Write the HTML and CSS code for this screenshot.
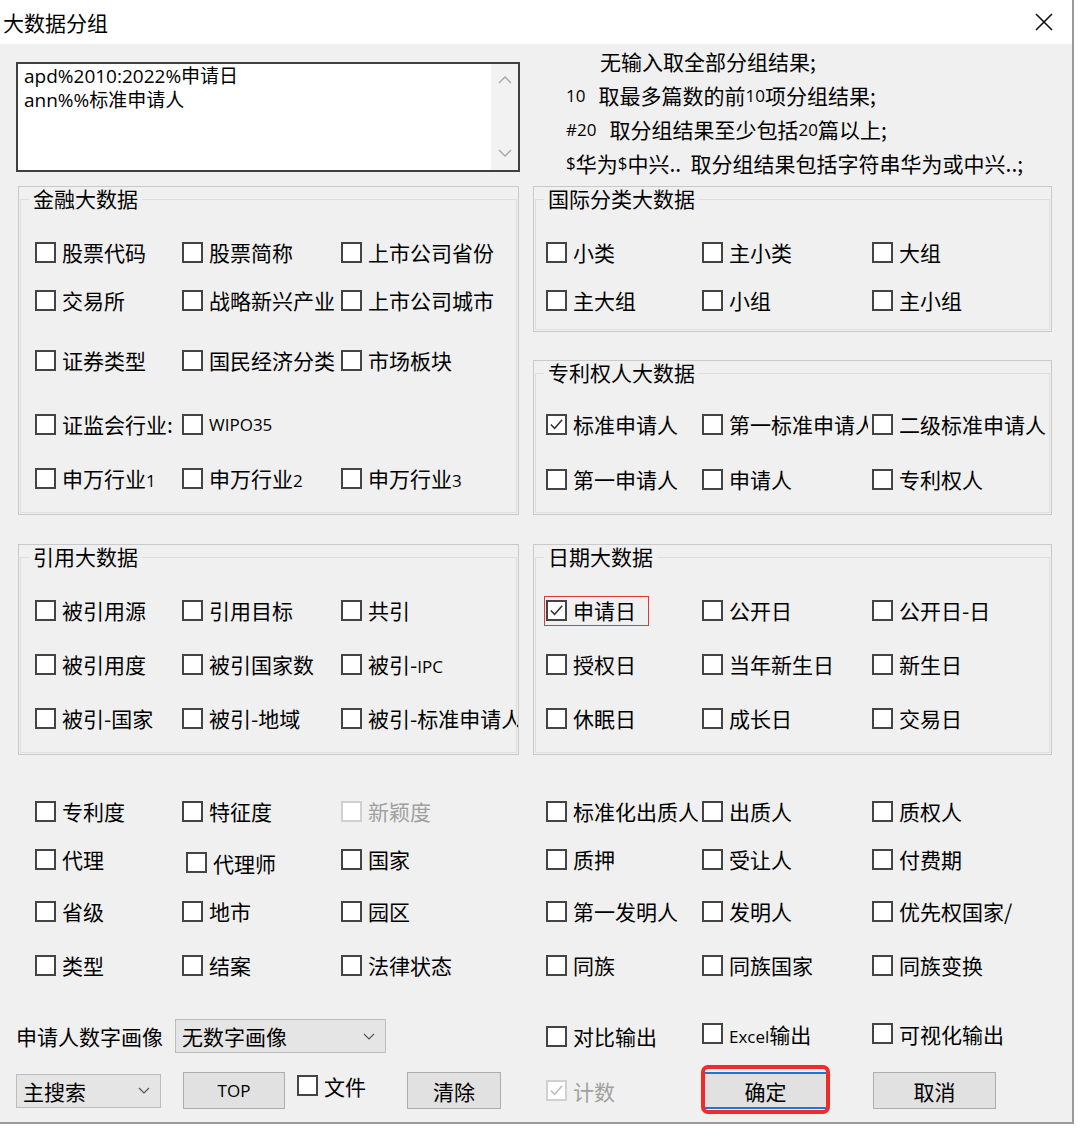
FILE: index.html
```html
<!DOCTYPE html>
<html lang="zh-CN">
    <head>
        <meta charset="UTF-8">
        <title>大数据分组</title>
        <link rel="stylesheet" href="styles.css">
    </head>
    <body>
        <div class="dialog">
            <div class="titlebar">
                <span class="title">大数据分组</span>
                <svg class="close" viewBox="0 0 18 18"><path d="M1 1L17 17M17 1L1 17" stroke="#111" stroke-width="1.6" fill="none"/></svg>
            </div>

            <div class="top">
                <div class="editbox">
                    <div class="edit-text">apd%2010:2022%申请日<br>ann%%标准申请人</div>
                    <div class="vscroll">
                        <svg class="chev" viewBox="0 0 14 8"><path d="M1 7L7 1L13 7" stroke="#a6a6a6" stroke-width="1.3" fill="none"/></svg>
                        <svg class="chev" viewBox="0 0 14 8"><path d="M1 1L7 7L13 1" stroke="#a6a6a6" stroke-width="1.3" fill="none"/></svg>
                    </div>
                </div>
                <div class="hints">
                    <div class="indent">无输入取全部分组结果;</div>
                    <div><span class="lat num">10</span>取最多篇数的前<span class="lat">10</span>项分组结果;</div>
                    <div><span class="lat num">#20</span>取分组结果至少包括<span class="lat">20</span>篇以上;</div>
                    <div><span class="lat">$</span>华为<span class="lat">$</span>中兴..&nbsp; 取分组结果包括字符串华为或中兴..;</div>
                </div>
            </div>

            <!-- first row of group boxes -->
            <div class="groups">
                <div class="group h-fin">
                    <div class="group-title">金融大数据</div>
                    <div class="cb-grid left-cols fin-rows">
                        <label class="cb"><span class="box"></span><span class="txt">股票代码</span></label>
                        <label class="cb"><span class="box"></span><span class="txt">股票简称</span></label>
                        <label class="cb"><span class="box"></span><span class="txt">上市公司省份</span></label>
                        <label class="cb"><span class="box"></span><span class="txt">交易所</span></label>
                        <label class="cb"><span class="box"></span><span class="txt">战略新兴产业</span></label>
                        <label class="cb"><span class="box"></span><span class="txt">上市公司城市</span></label>
                        <label class="cb"><span class="box"></span><span class="txt">证券类型</span></label>
                        <label class="cb"><span class="box"></span><span class="txt">国民经济分类</span></label>
                        <label class="cb"><span class="box"></span><span class="txt">市场板块</span></label>
                        <label class="cb"><span class="box"></span><span class="txt">证监会行业:</span></label>
                        <label class="cb"><span class="box"></span><span class="txt lat">WIPO35</span></label>
                        <span></span>
                        <label class="cb"><span class="box"></span><span class="txt">申万行业<span class="lat">1</span></span></label>
                        <label class="cb"><span class="box"></span><span class="txt">申万行业<span class="lat">2</span></span></label>
                        <label class="cb"><span class="box"></span><span class="txt">申万行业<span class="lat">3</span></span></label>
                    </div>
                </div>

                <div class="stack">
                    <div class="group h-ipc">
                        <div class="group-title">国际分类大数据</div>
                        <div class="cb-grid right-cols ipc-rows">
                            <label class="cb"><span class="box"></span><span class="txt">小类</span></label>
                            <label class="cb"><span class="box"></span><span class="txt">主小类</span></label>
                            <label class="cb"><span class="box"></span><span class="txt">大组</span></label>
                            <label class="cb"><span class="box"></span><span class="txt">主大组</span></label>
                            <label class="cb"><span class="box"></span><span class="txt">小组</span></label>
                            <label class="cb"><span class="box"></span><span class="txt">主小组</span></label>
                        </div>
                    </div>
                    <div class="group h-holder">
                        <div class="group-title">专利权人大数据</div>
                        <div class="cb-grid right-cols holder-rows">
                            <label class="cb"><span class="box checked"><svg viewBox="0 0 18 18"><path d="M3 9L7 13L15 4" stroke="#333" stroke-width="1.6" fill="none"/></svg></span><span class="txt">标准申请人</span></label>
                            <label class="cb"><span class="box"></span><span class="txt">第一标准申请人</span></label>
                            <label class="cb"><span class="box"></span><span class="txt">二级标准申请人</span></label>
                            <label class="cb"><span class="box"></span><span class="txt">第一申请人</span></label>
                            <label class="cb"><span class="box"></span><span class="txt">申请人</span></label>
                            <label class="cb"><span class="box"></span><span class="txt">专利权人</span></label>
                        </div>
                    </div>
                </div>
            </div>

            <!-- second row of group boxes -->
            <div class="groups second">
                <div class="group h-cite">
                    <div class="group-title">引用大数据</div>
                    <div class="cb-grid left-cols cite-rows">
                        <label class="cb"><span class="box"></span><span class="txt">被引用源</span></label>
                        <label class="cb"><span class="box"></span><span class="txt">引用目标</span></label>
                        <label class="cb"><span class="box"></span><span class="txt">共引</span></label>
                        <label class="cb"><span class="box"></span><span class="txt">被引用度</span></label>
                        <label class="cb"><span class="box"></span><span class="txt">被引国家数</span></label>
                        <label class="cb"><span class="box"></span><span class="txt">被引-<span class="lat">IPC</span></span></label>
                        <label class="cb"><span class="box"></span><span class="txt">被引-国家</span></label>
                        <label class="cb"><span class="box"></span><span class="txt">被引-地域</span></label>
                        <label class="cb"><span class="box"></span><span class="txt">被引-标准申请人</span></label>
                    </div>
                </div>
                <div class="group h-cite">
                    <div class="group-title">日期大数据</div>
                    <div class="cb-grid right-cols cite-rows">
                        <label class="cb marked"><span class="box checked"><svg viewBox="0 0 18 18"><path d="M3 9L7 13L15 4" stroke="#333" stroke-width="1.6" fill="none"/></svg></span><span class="txt">申请日</span></label>
                        <label class="cb"><span class="box"></span><span class="txt">公开日</span></label>
                        <label class="cb"><span class="box"></span><span class="txt">公开日-日</span></label>
                        <label class="cb"><span class="box"></span><span class="txt">授权日</span></label>
                        <label class="cb"><span class="box"></span><span class="txt">当年新生日</span></label>
                        <label class="cb"><span class="box"></span><span class="txt">新生日</span></label>
                        <label class="cb"><span class="box"></span><span class="txt">休眠日</span></label>
                        <label class="cb"><span class="box"></span><span class="txt">成长日</span></label>
                        <label class="cb"><span class="box"></span><span class="txt">交易日</span></label>
                    </div>
                </div>
            </div>

            <!-- loose options -->
            <div class="options">
                <label class="cb"><span class="box"></span><span class="txt">专利度</span></label>
                <label class="cb"><span class="box"></span><span class="txt">特征度</span></label>
                <label class="cb disabled"><span class="box"></span><span class="txt">新颖度</span></label>
                <label class="cb"><span class="box"></span><span class="txt">标准化出质人</span></label>
                <label class="cb"><span class="box"></span><span class="txt">出质人</span></label>
                <label class="cb"><span class="box"></span><span class="txt">质权人</span></label>

                <label class="cb"><span class="box"></span><span class="txt">代理</span></label>
                <label class="cb nudge"><span class="box"></span><span class="txt">代理师</span></label>
                <label class="cb"><span class="box"></span><span class="txt">国家</span></label>
                <label class="cb"><span class="box"></span><span class="txt">质押</span></label>
                <label class="cb"><span class="box"></span><span class="txt">受让人</span></label>
                <label class="cb"><span class="box"></span><span class="txt">付费期</span></label>

                <label class="cb"><span class="box"></span><span class="txt">省级</span></label>
                <label class="cb"><span class="box"></span><span class="txt">地市</span></label>
                <label class="cb"><span class="box"></span><span class="txt">园区</span></label>
                <label class="cb"><span class="box"></span><span class="txt">第一发明人</span></label>
                <label class="cb"><span class="box"></span><span class="txt">发明人</span></label>
                <label class="cb"><span class="box"></span><span class="txt">优先权国家/</span></label>

                <label class="cb"><span class="box"></span><span class="txt">类型</span></label>
                <label class="cb"><span class="box"></span><span class="txt">结案</span></label>
                <label class="cb"><span class="box"></span><span class="txt">法律状态</span></label>
                <label class="cb"><span class="box"></span><span class="txt">同族</span></label>
                <label class="cb"><span class="box"></span><span class="txt">同族国家</span></label>
                <label class="cb"><span class="box"></span><span class="txt">同族变换</span></label>
            </div>

            <div class="row-a">
                <div class="left">
                    <span>申请人数字画像</span>
                    <div class="combo w-portrait">
                        <span>无数字画像</span>
                        <svg class="drop" viewBox="0 0 12 7"><path d="M1 1L6 6L11 1" stroke="#555" stroke-width="1.2" fill="none"/></svg>
                    </div>
                </div>
                <div class="right">
                    <label class="cb"><span class="box"></span><span class="txt">对比输出</span></label>
                    <label class="cb up"><span class="box"></span><span class="txt"><span class="lat">Excel</span>输出</span></label>
                    <label class="cb up"><span class="box"></span><span class="txt">可视化输出</span></label>
                </div>
            </div>

            <div class="row-b">
                <div class="left">
                    <div class="combo w-search">
                        <span>主搜索</span>
                        <svg class="drop" viewBox="0 0 12 7"><path d="M1 1L6 6L11 1" stroke="#555" stroke-width="1.2" fill="none"/></svg>
                    </div>
                    <button class="btn w-top"><span class="lat">TOP</span></button>
                    <label class="cb file"><span class="box"></span><span class="txt">文件</span></label>
                    <button class="btn w-clear">清除</button>
                </div>
                <div class="right">
                    <label class="cb disabled"><span class="box checked"><svg viewBox="0 0 18 18"><path d="M3 9L7 13L15 4" stroke="#bdbdbd" stroke-width="1.6" fill="none"/></svg></span><span class="txt">计数</span></label>
                    <button class="btn default w-ok">确定</button>
                    <button class="btn w-cancel">取消</button>
                </div>
            </div>
        </div>
    </body>
</html>
```

FILE: styles.css
```css
* {
    box-sizing: border-box;
}
body {
    margin: 0;
    background: #fff;
    font-family: "Noto Sans CJK SC", "Microsoft YaHei", sans-serif;
    font-size: 21px;
    color: #000;
}
.dialog {
    width: 1074px;
    height: 1124px;
    background: #f0f0f0;
    border-right: 2px solid #9a9a9a;
    border-bottom: 2px solid #9a9a9a;
}
.titlebar {
    height: 44px;
    background: #fff;
    display: flex;
    align-items: center;
    justify-content: space-between;
    padding: 0 19px 0 3px;
}
.title {
    line-height: 1;
}
.close {
    width: 18px;
    height: 18px;
}
.lat {
    font-family: "Open Sans", "Liberation Sans", sans-serif;
    font-size: 17px;
    line-height: 1;
}
/* top: edit box and hints */
.top {
    display: flex;
    height: 142px;
}
.editbox {
    margin: 18px 0 0 16px;
    width: 504px;
    height: 110px;
    background: #fff;
    border: 2px solid #404040;
    display: flex;
}
.edit-text {
    flex: 1;
    padding: 0 0 0 6px;
    font-family: "Open Sans", "Noto Sans CJK SC", sans-serif;
    font-size: 19px;
    line-height: 24px;
}
.vscroll {
    width: 27px;
    background: #f2f2f2;
    display: flex;
    flex-direction: column;
    justify-content: space-between;
    align-items: center;
    padding: 12px 0 13px;
}
.chev {
    width: 14px;
    height: 8px;
}
.hints {
    margin-left: 46px;
    white-space: nowrap;
}
.hints div {
    height: 34px;
    line-height: 32px;
    display: flex;
    align-items: center;
}
.hints div:last-child {
    height: 33px;
}
.hints .indent {
    padding-left: 34px;
}
.hints .num {
    margin-right: 13px;
}
/* group boxes */
.groups {
    display: grid;
    grid-template-columns: 501px 519px;
    column-gap: 14px;
    padding-left: 18px;
}
.groups.second {
    margin-top: 29px;
}
.stack {
    display: flex;
    flex-direction: column;
    gap: 28px;
}
.group {
    position: relative;
    border: 1px solid #c9c9c9;
}
.group::before {
    content: "";
    position: absolute;
    top: 12px;
    left: 1px;
    right: 1px;
    bottom: 1px;
    border: 1px solid #dedede;
}
.h-fin { height: 329px; }
.h-ipc { height: 146px; }
.h-holder { height: 155px; }
.h-cite { height: 211px; }
.group-title {
    position: relative;
    z-index: 1;
    width: fit-content;
    margin-left: 10px;
    padding: 0 4px;
    height: 24px;
    line-height: 22px;
    background: #f0f0f0;
}
.cb-grid {
    display: grid;
    align-items: center;
}
.left-cols {
    grid-template-columns: 147px 159px 1fr;
    padding-left: 16px;
}
.right-cols {
    grid-template-columns: 156px 170px 1fr;
    padding-left: 12px;
}
.fin-rows {
    padding-top: 17px;
    grid-template-rows: 48px 48px 72px 56px 52px;
}
.ipc-rows {
    padding-top: 17px;
    grid-template-rows: 48px 48px;
}
.holder-rows {
    padding-top: 15px;
    grid-template-rows: 48px 62px;
}
.cite-rows {
    padding-top: 14px;
    grid-template-rows: 54px 54px 54px;
}
/* checkbox */
.cb {
    display: flex;
    align-items: center;
    gap: 6px;
    width: calc(100% - 4px);
    white-space: nowrap;
    overflow-x: clip;
    line-height: 30px;
}
.box {
    flex: none;
    width: 21px;
    height: 21px;
    background: #fff;
    border: 2px solid #444;
    display: flex;
    align-items: center;
    justify-content: center;
}
.box svg {
    width: 17px;
    height: 17px;
}
.cb.disabled .box {
    border-color: #d0d0d0;
}
.cb.disabled .txt {
    color: #a0a0a0;
}
.cb.marked {
    position: relative;
    overflow: visible;
}
.cb.marked::after {
    content: "";
    position: absolute;
    left: -2px;
    top: 1px;
    bottom: -1px;
    width: 103px;
    border: 1.5px solid #e53935;
}
.cb.nudge {
    margin: 7px 0 0 4px;
}
/* loose options */
.options {
    display: grid;
    margin-left: 35px;
    padding-top: 32px;
    grid-template-columns: 147px 159px 205px 156px 170px 1fr;
    grid-template-rows: 48px 48px 56px 52px;
    align-items: center;
}
/* bottom rows */
.row-a,
.row-b {
    display: flex;
    align-items: center;
    padding-left: 16px;
}
.row-a {
    height: 36px;
    margin-top: 27px;
}
.row-b {
    height: 37px;
    margin-top: 18px;
}
.row-a .left,
.row-b .left {
    width: 530px;
    flex: none;
    display: flex;
    align-items: center;
}
.row-a .left {
    gap: 12px;
}
.row-a .right,
.row-b .right {
    flex: 1;
    display: grid;
    grid-template-columns: 156px 170px 1fr;
    align-items: center;
}
.cb.up {
    margin-bottom: 5px;
}
.combo {
    display: flex;
    align-items: center;
    justify-content: space-between;
    height: 34px;
    padding: 0 10px 0 6px;
    background: #e5e5e5;
    border: 1px solid #bcbcbc;
}
.drop {
    width: 12px;
    height: 7px;
}
.w-portrait { width: 211px; }
.w-search { width: 145px; }
.btn {
    height: 37px;
    font: inherit;
    color: #000;
    background: #e1e1e1;
    border: 1px solid #adadad;
    padding: 0;
    display: flex;
    align-items: center;
    justify-content: center;
}
.w-top {
    width: 102px;
    margin-left: 22px;
}
.cb.file {
    width: 110px;
    margin: 0 0 10px 12px;
}
.w-clear { width: 94px; }
.w-ok {
    width: 125px;
    margin-left: 1px;
}
.w-cancel {
    width: 123px;
    margin-left: 1px;
}
.btn.default {
    position: relative;
    border: 2px solid #1a78d4;
}
.btn.default::after {
    content: "";
    position: absolute;
    left: -4px;
    right: -4px;
    top: -9px;
    bottom: -7px;
    border: 4px solid #f22a2a;
    border-radius: 7px;
}
```
